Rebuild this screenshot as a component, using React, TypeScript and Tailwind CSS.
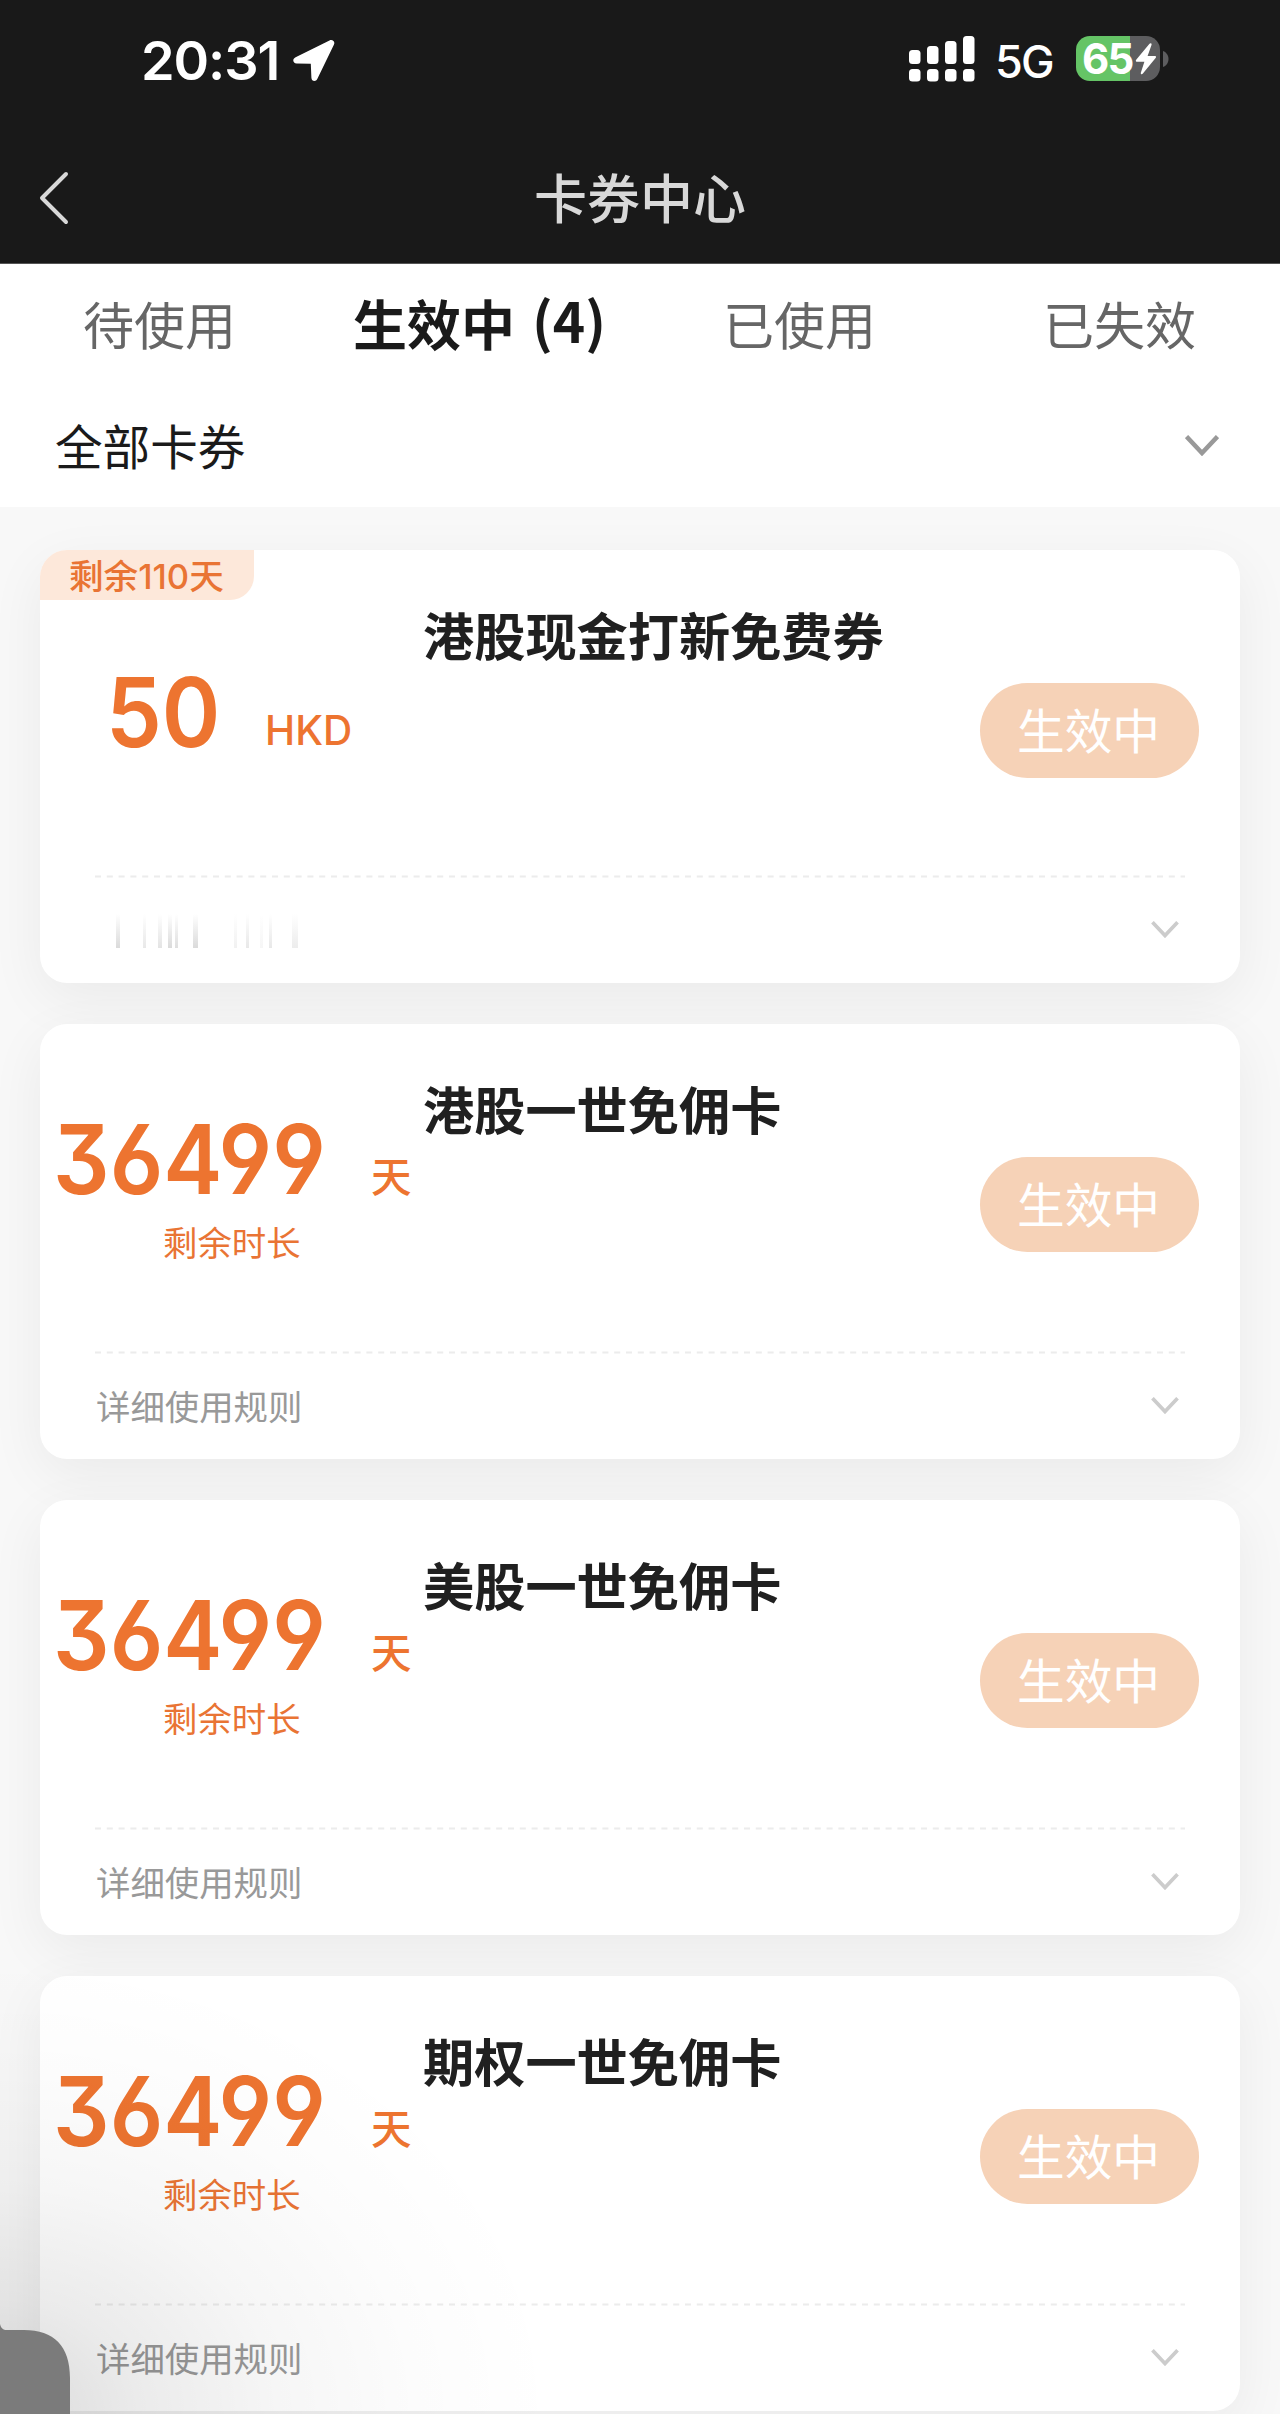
import { clsx } from "clsx";

interface Coupon {
  id: number;
  value: string;
  unit: string;
  title: string;
  caption?: string;
  badge?: string;
  rules?: string;
}

const coupons: Coupon[] = [
  { id: 1, value: "50", unit: "HKD", title: "港股现金打新免费券", badge: "剩余110天" },
  { id: 2, value: "36499", unit: "天", title: "港股一世免佣卡", caption: "剩余时长", rules: "详细使用规则" },
  { id: 3, value: "36499", unit: "天", title: "美股一世免佣卡", caption: "剩余时长", rules: "详细使用规则" },
  { id: 4, value: "36499", unit: "天", title: "期权一世免佣卡", caption: "剩余时长", rules: "详细使用规则" },
];

const tabs = [
  { label: "待使用" },
  { label: "生效中", count: 4 },
  { label: "已使用" },
  { label: "已失效" },
];

// faded bars of the rule line: x, width, opacity
const bars = [
  [20, 4, 0.4],
  [47, 3, 0.25],
  [62, 4, 0.3],
  [72, 4, 0.4],
  [79, 3, 0.35],
  [97, 5, 0.4],
  [138, 3, 0.15],
  [150, 3, 0.25],
  [164, 3, 0.1],
  [173, 3, 0.25],
  [196, 6, 0.2],
];

function StatusBar() {
  return (
    <div className="flex h-[120px] items-start pr-[111px] pl-[141px]">
      <span className="mt-[28px] w-[141px] text-[54px] leading-[66px] font-semibold tracking-[-0.02em] whitespace-nowrap text-white">
        20:31
      </span>
      <svg className="mt-[39px] ml-[11px] h-[43px] w-[42px]" viewBox="0 0 42 43" fill="#fff">
        <path d="M36.5 1.4 2.6 18.2C-1 20-.2 24.3 3.6 24.4L17.8 24.8 18.4 38.8C18.6 42.6 22.9 43.2 24.4 39.8L41 5.6C42.3 2.6 39.5 0 36.5 1.4Z" />
      </svg>
      <svg className="mt-[35px] ml-auto h-[47px] w-[66px]" viewBox="0 0 66 47" fill="#fff">
        <rect x="0" y="15" width="11.5" height="14" rx="3.5" />
        <rect x="18" y="11" width="11.5" height="18" rx="3.5" />
        <rect x="36" y="6" width="11.5" height="23" rx="3.5" />
        <rect x="54" y="1" width="11.5" height="28" rx="3.5" />
        <rect x="0" y="34" width="11.5" height="12.5" rx="3.5" />
        <rect x="18" y="34" width="11.5" height="12.5" rx="3.5" />
        <rect x="36" y="34" width="11.5" height="12.5" rx="3.5" />
        <rect x="54" y="34" width="11.5" height="12.5" rx="3.5" />
      </svg>
      <span className="mt-[34px] ml-[20px] w-[59px] text-[45px] leading-[56px] font-medium tracking-[-0.04em] text-white">
        5G
      </span>
      <div className="relative mt-[36px] ml-[22px] flex h-[45px] w-[84px] items-center rounded-[14px] bg-gradient-to-r from-[#65c466] from-[64.5%] to-[#5d5d5f] to-[64.5%] pl-[6px]">
        <span className="text-[42px] leading-[52px] font-bold tracking-[-0.04em] text-white">65</span>
        <svg className="absolute top-[7px] left-[59px] h-[32px] w-[22px]" viewBox="0 0 22 32" fill="#fff">
          <path d="M14.5.8 1.2 16.8C.4 17.8.9 18.7 2 18.7H9.4L5.9 29.6C5.4 31.2 6.8 31.9 7.9 30.6L20.6 14.9C21.4 13.9 21 13 19.8 13H12.6L16.5 2C17 .4 15.6-.4 14.5.8Z" />
        </svg>
      </div>
      <svg className="mt-[51px] ml-[3px] h-[16px] w-[6px]" viewBox="0 0 6 16" fill="#5d5d5f">
        <path d="M0 0C3 1 5.5 4 5.5 8S3 15 0 16Z" />
      </svg>
    </div>
  );
}

function Chevron({ className, color }: { className: string; color: string }) {
  return (
    <svg className={className} viewBox="0 0 34 21" fill="none" stroke={color} strokeWidth="4.5">
      <path d="M1.5 1.5 17 18 32.5 1.5" />
    </svg>
  );
}

function CouponCard({ coupon }: { coupon: Coupon }) {
  const long = coupon.value.length > 2;
  return (
    <section
      className={clsx(
        "relative flex flex-col rounded-[27px] bg-white shadow-[0_16px_56px_rgba(0,0,0,0.06)]",
        long ? "h-[435px]" : "h-[433px]",
      )}
    >
      {coupon.badge && (
        <div className="absolute top-0 left-0 flex h-[50px] w-[214px] items-center rounded-tl-[27px] rounded-br-[24px] bg-[#fde8da] pt-[4px] pl-[29px] text-[34.6px] font-[550] text-[#e97434]">
          {coupon.badge}
        </div>
      )}
      <div className={clsx("flex", long ? "h-[327px]" : "h-[325px]")}>
        <div className={clsx("w-[384px] shrink-0", long ? "pt-[87px] pl-[13px]" : "pt-[114px] pl-[66px]")}>
          <div className="flex items-baseline text-[#ed7430]">
            <span
              className={clsx(
                "block origin-left scale-x-[0.925] text-[96px] leading-[96px] font-[560] [font-feature-settings:'cv03','cv04','cv09']",
                long ? "w-[318px]" : "w-[159px]",
              )}
            >
              {coupon.value}
            </span>
            <span className="relative -top-[2px] text-[40.5px] leading-none font-[550]">{coupon.unit}</span>
          </div>
          {coupon.caption && (
            <div className="mt-[13px] pl-[110px] text-[34.4px] leading-[48px] text-[#e97434]">{coupon.caption}</div>
          )}
        </div>
        <h2 className="-ml-px pt-[52px] text-[51.2px] leading-[70px] font-bold whitespace-nowrap text-[#202020]">
          {coupon.title}
        </h2>
        <button className="mt-[133px] mr-[41px] ml-auto h-[95px] w-[219px] shrink-0 rounded-full bg-[#f6d2b7] pt-[4px] pr-[2px] text-[47.7px] leading-[91px] text-white">
          生效中
        </button>
      </div>
      <svg className="ml-[55px] h-[3px] w-[1090px]" viewBox="0 0 1090 3">
        <line x1="0" y1="1.5" x2="1090" y2="1.5" stroke="#ececec" strokeWidth="2" strokeDasharray="6 5.8" />
      </svg>
      <div className="flex flex-1 items-center justify-between pt-[3px] pr-[61px] pl-[56px]">
        {coupon.rules ? (
          <span className="text-[34.4px] leading-[48px] text-[#999]">{coupon.rules}</span>
        ) : (
          <svg className="h-[36px] w-[210px]" viewBox="0 0 210 36">
            <defs>
              <linearGradient id="barFade" x1="0" y1="0" x2="0" y2="1">
                <stop offset="0%" stopColor="#999" stopOpacity={0} />
                <stop offset="100%" stopColor="#999" stopOpacity={0.9} />
              </linearGradient>
            </defs>
            {bars.map(([x, w, o]) => (
              <rect key={x} x={x} y="0" width={w} height="34" fill="url(#barFade)" opacity={o} />
            ))}
          </svg>
        )}
        <Chevron className="mb-[5px] h-[17px] w-[28px]" color="#ccc" />
      </div>
    </section>
  );
}

export default function App() {
  return (
    <div className="relative flex h-[2414px] w-[1280px] flex-col overflow-hidden bg-[#f8f8f8] font-[Inter,'Noto_Sans_CJK_SC',sans-serif]">
      <header className="h-[264px] shrink-0 border-b border-[#555] bg-[#191919]">
        <StatusBar />
        <div className="flex h-[156px] items-center justify-center">
          <svg className="ml-[38px] h-[54px] w-[32px]" viewBox="0 0 32 54" fill="none" stroke="#d8d8d8" strokeWidth="4" strokeLinecap="round" strokeLinejoin="round">
            <path d="M28 3 4 27 28 51" />
          </svg>
          <h1 className="flex-1 pt-[5px] pr-[70px] text-center text-[53px] font-medium text-[#d8d8d8]">卡券中心</h1>
        </div>
      </header>

      <div className="h-[243px] shrink-0 bg-white">
        <nav className="grid h-[126px] grid-cols-4 items-center text-center whitespace-nowrap">
          {tabs.map((tab) =>
            tab.count ? (
              <span key={tab.label} className="pr-px text-[54px] leading-[78px] font-bold text-[#1a1a1a]">
                {tab.label}
                <span className="relative -top-[3px] ml-[17px] font-['Noto_Sans_CJK_SC',sans-serif] text-[55px] leading-none font-bold">
                  ({tab.count})
                </span>
              </span>
            ) : (
              <span key={tab.label} className="pr-px text-[51px] leading-[80px] text-[#666]">
                {tab.label}
              </span>
            ),
          )}
        </nav>
        <div className="flex h-[117px] items-center justify-between pr-[61px] pl-[55px]">
          <span className="pb-[2px] text-[47.6px] text-[#1a1a1a]">全部卡券</span>
          <Chevron className="mb-[7px] h-[21px] w-[34px]" color="#999" />
        </div>
      </div>

      <main className="flex flex-col gap-[41px] px-[40px] pt-[43px]">
        {coupons.map((coupon) => (
          <CouponCard key={coupon.id} coupon={coupon} />
        ))}
      </main>

      {/* floating handle with its shade in the corner */}
      <div className="pointer-events-none absolute bottom-0 left-0 h-[460px] w-[560px] bg-[radial-gradient(farthest-side_at_0%_100%,rgba(0,0,0,0.15),rgba(0,0,0,0.08)_25%,rgba(0,0,0,0.035)_50%,rgba(0,0,0,0.012)_75%,transparent)]" />
      <svg className="absolute bottom-0 left-0 h-[90px] w-[70px]" viewBox="0 0 70 90" fill="#7b7b7b">
        <path d="M0 0C1 4 3 6 7 6H24C54 6 70 22 70 54V90H0Z" />
      </svg>
    </div>
  );
}
